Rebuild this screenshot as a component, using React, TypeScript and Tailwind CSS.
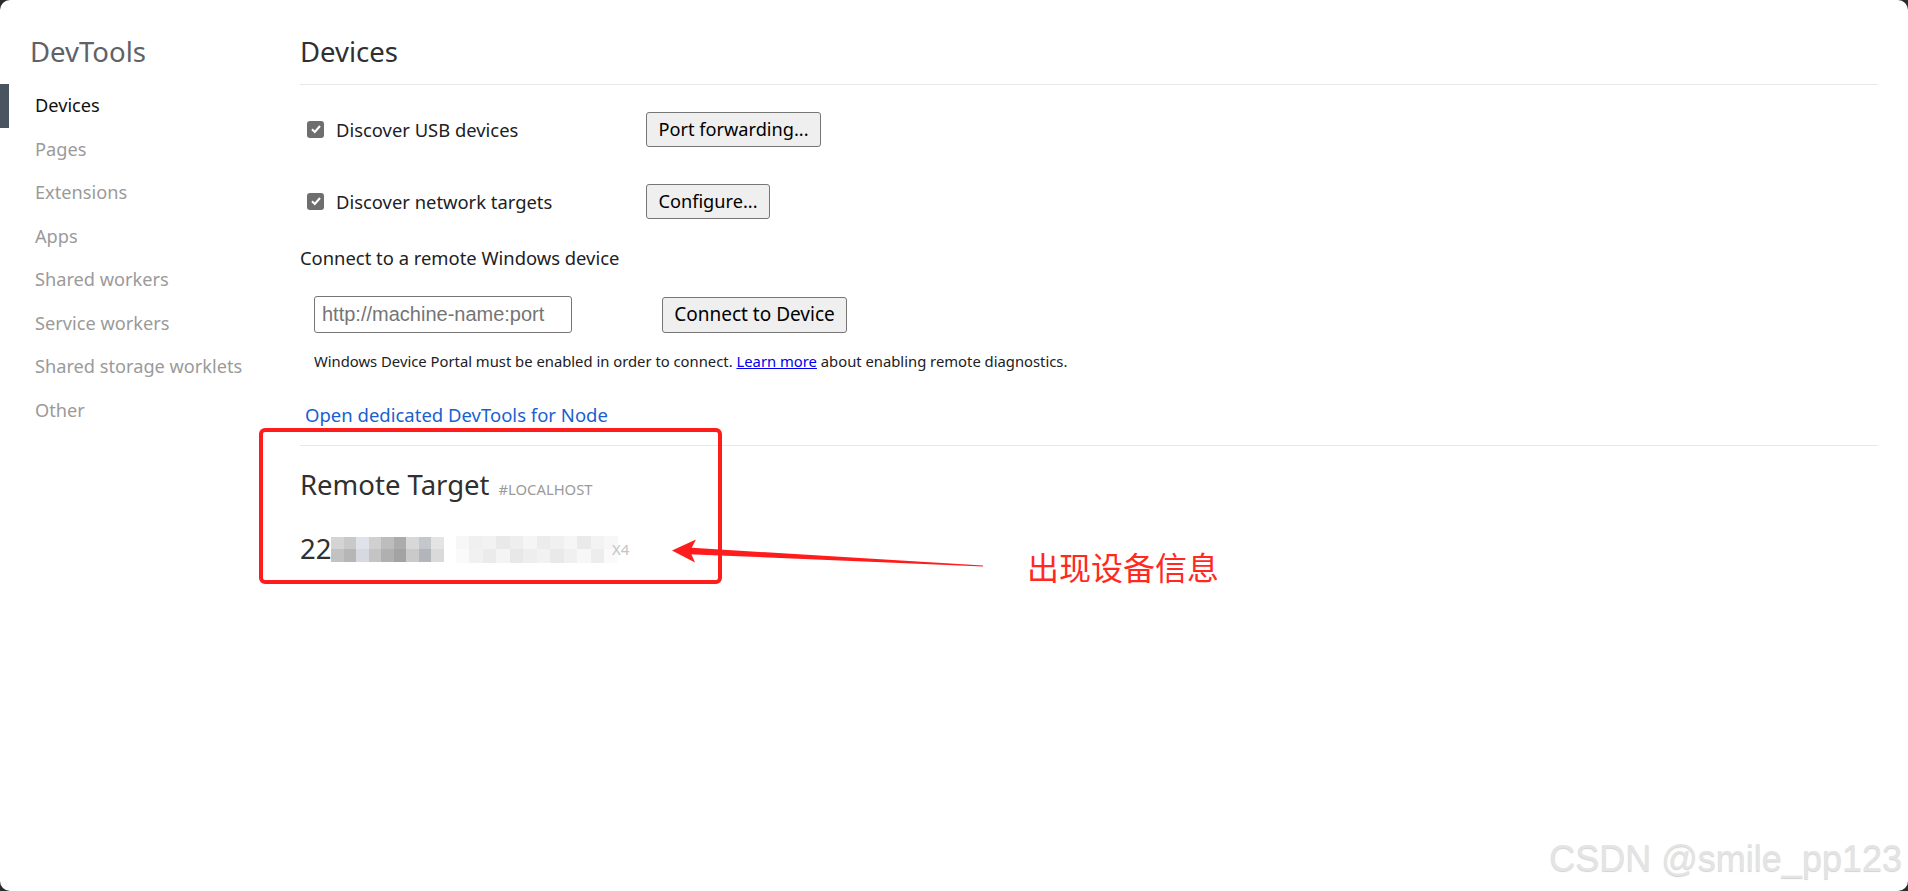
import { useState } from 'react'

const navItems = [
  'Devices',
  'Pages',
  'Extensions',
  'Apps',
  'Shared workers',
  'Service workers',
  'Shared storage worklets',
  'Other',
]

// mosaic cells that hide the device serial
const darkCells = [
  ['#d4d4d4', '#c9c9c9', '#dfe3e9', '#d0d0d0', '#bdbdbd', '#acacac', '#d8d8d8', '#c4c8cc', '#e4e4e4'],
  ['#c2c2c2', '#b6b6b6', '#d6dae0', '#c4c4c4', '#b0b0b0', '#a3a3a3', '#cacaca', '#b2b6ba', '#dadada'],
]
const lightCells = [
  ['#f7f7f7', '#f0f0f0', '#f2f2f2', '#e9e9e9', '#eeeeee', '#f5f5f5', '#ececec', '#f0f0f0', '#f6f6f6', '#eaeaea', '#f3f3f3', '#f7f7f7'],
  ['#fafafa', '#f1f1f1', '#ebebeb', '#f4f4f4', '#e8e8e8', '#eeeeee', '#f2f2f2', '#e9e9e9', '#f0f0f0', '#f7f7f7', '#ededed', '#fafafa'],
]

function Checkbox() {
  return (
    <div className="w-[17px] h-[17px] rounded-[3px] bg-[#6e6e6e] flex items-center justify-center shrink-0">
      <svg width="12" height="12" viewBox="0 0 12 12">
        <path d="M2 6.3 L4.8 9 L10 3" stroke="#fff" strokeWidth="2" fill="none" />
      </svg>
    </div>
  )
}

function Mosaic({ rows, cell }: { rows: string[][]; cell: number }) {
  return (
    <div className="flex flex-col">
      {rows.map((row, i) => (
        <div key={i} className="flex">
          {row.map((c, j) => (
            <div key={j} style={{ backgroundColor: c, width: cell, height: cell }} />
          ))}
        </div>
      ))}
    </div>
  )
}

export default function App() {
  const [active] = useState('Devices')

  return (
    <div className="w-full h-screen bg-[#2b2b2b] font-['Noto_Sans',sans-serif]">
      <div className="relative w-full h-full bg-white rounded-[10px] overflow-hidden flex">
        {/* sidebar */}
        <div className="w-[300px] shrink-0">
          <h1 className="pl-[30px] pt-[34px] h-[84px] text-[27.5px] leading-[36px] text-[#5f6368]">
            DevTools
          </h1>
          <nav>
            {navItems.map((item) => (
              <div key={item} className="flex items-center h-[43.5px]">
                <div
                  className={
                    item === active ? 'w-[9px] h-full bg-[#4a5360]' : 'w-[9px] h-full bg-transparent'
                  }
                />
                <span
                  className={
                    item === active
                      ? 'ml-[26px] text-[18.2px] text-[#111111]'
                      : 'ml-[26px] text-[18.2px] text-[#9a9a9a]'
                  }
                >
                  {item}
                </span>
              </div>
            ))}
          </nav>
        </div>

        {/* main */}
        <div className="flex-1 pr-[30px] text-[#202124]">
          <div className="pt-[34px] pb-[14px] border-b border-[#e8e8e8]">
            <h2 className="text-[27.5px] leading-[36px] text-[#303030]">Devices</h2>
          </div>

          <div className="mt-[27px] flex items-center h-[35px] pl-[7px]">
            <label className="w-[339px] flex items-center gap-[12px] text-[18.4px]">
              <Checkbox />
              Discover USB devices
            </label>
            <button className="w-[175px] h-[35px] bg-[#efefef] border border-[#767676] rounded-[3px] text-[18.2px] text-black">
              Port forwarding...
            </button>
          </div>

          <div className="mt-[37px] flex items-center h-[35px] pl-[7px]">
            <label className="w-[339px] flex items-center gap-[12px] text-[18.4px]">
              <Checkbox />
              Discover network targets
            </label>
            <button className="w-[124px] h-[35px] bg-[#efefef] border border-[#767676] rounded-[3px] text-[18.2px] text-black">
              Configure...
            </button>
          </div>

          <div className="mt-[26px] text-[18.4px] leading-[26px]">Connect to a remote Windows device</div>

          <div className="mt-[25px] pl-[14px] flex items-center gap-[90px]">
            <input
              placeholder="http://machine-name:port"
              className="w-[258px] h-[37px] border border-[#767676] rounded-[3px] px-[7px] text-[20px] font-['Liberation_Sans',sans-serif] placeholder:text-[#757575] outline-none"
            />
            <button className="w-[185px] h-[36px] bg-[#efefef] border border-[#767676] rounded-[3px] text-[19px] text-black">
              Connect to Device
            </button>
          </div>

          <div className="mt-[18px] pl-[14px] text-[14.8px] leading-[20px]">
            Windows Device Portal must be enabled in order to connect.{' '}
            <a className="text-[#0000ee] underline">Learn more</a> about enabling remote diagnostics.
          </div>

          <div className="mt-[31px] pl-[5px] text-[18.5px] leading-[26px] text-[#1a5fd0]">
            Open dedicated DevTools for Node
          </div>

          <div className="mt-[17px] border-t border-[#e8e8e8]" />

          <div className="mt-[21px] flex items-baseline gap-[9px]">
            <span className="text-[27.5px] leading-[36px] text-[#303030]">Remote Target</span>
            <span className="text-[14.8px] text-[#9a9a9a]">#LOCALHOST</span>
          </div>

          <div className="mt-[28px] flex items-center h-[36px]">
            <span className="text-[27.5px] leading-[36px] text-[#303030]">22</span>
            <Mosaic rows={darkCells} cell={12.5} />
            <div className="ml-[12px] flex items-center">
              <Mosaic rows={lightCells} cell={13.5} />
              <span className="-ml-[6px] text-[15px] text-[#c4c4c4]">X4</span>
            </div>
          </div>
        </div>

        {/* annotation */}
        <div className="absolute left-[259px] top-[428px] w-[463px] h-[156px] border-4 border-[#ff1c1c] rounded-[6px]" />
        <svg className="absolute left-[660px] top-[535px]" width="340" height="45" viewBox="0 0 340 45">
          <polygon points="28,12.6 323,30.5 323,31.5 28,19.2" fill="#ff1c1c" />
          <polygon points="12,15.5 36,4.5 30,16 35,27.5" fill="#ff1c1c" />
        </svg>
        <div className="absolute left-[1027px] top-[545px] text-[32px] leading-[42px] text-[#ff2a1f] font-['Noto_Sans_CJK_SC',sans-serif]">
          出现设备信息
        </div>

        <div className="absolute right-[6px] bottom-[11px] text-[36px] leading-[42px] text-[#e4e4e4] font-['Liberation_Sans',sans-serif] [text-shadow:0_1px_1px_rgba(0,0,0,0.18)]">
          CSDN @smile_pp123
        </div>
      </div>
    </div>
  )
}
